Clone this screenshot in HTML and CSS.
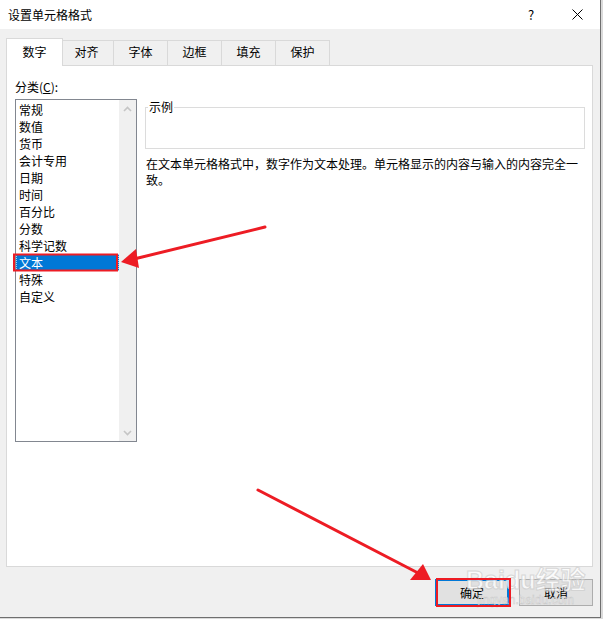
FILE: index.html
```html
<!DOCTYPE html>
<html lang="zh-CN">
  <head>
    <meta charset="UTF-8" />
    <title>设置单元格格式</title>
    <link rel="stylesheet" href="styles.css">
  </head>
  <body>
    <div class="dialog">
      <!-- Title bar -->
      <div class="titlebar">
        <span class="title">设置单元格格式</span>
        <span class="title-btn">?</span>
        <span class="title-btn">
          <svg width="11" height="11" viewBox="0 0 11 11">
            <path d="M0.5 0.5 L10.5 10.5 M10.5 0.5 L0.5 10.5" stroke="#000" stroke-width="1" fill="none"/>
          </svg>
        </span>
      </div>
      <div class="window-body">
        <!-- Tabs -->
        <div class="tabs">
          <div class="tab active">数字</div>
          <div class="tab">对齐</div>
          <div class="tab">字体</div>
          <div class="tab">边框</div>
          <div class="tab">填充</div>
          <div class="tab">保护</div>
        </div>
        <div class="panel">
          <div class="category-label">分类(<u>C</u>):</div>
          <div class="listbox">
            <ul class="list">
              <li>常规</li>
              <li>数值</li>
              <li>货币</li>
              <li>会计专用</li>
              <li>日期</li>
              <li>时间</li>
              <li>百分比</li>
              <li>分数</li>
              <li>科学记数</li>
              <li class="selected">文本</li>
              <li>特殊</li>
              <li>自定义</li>
            </ul>
            <div class="scrollbar">
              <span class="scroll-arrow">
                <svg width="9" height="6" viewBox="0 0 9 6"><path d="M1 5 L4.5 1.5 L8 5" stroke="#c5c5c5" stroke-width="1.6" fill="none"/></svg>
              </span>
              <span class="scroll-arrow">
                <svg width="9" height="6" viewBox="0 0 9 6"><path d="M1 1 L4.5 4.5 L8 1" stroke="#c5c5c5" stroke-width="1.6" fill="none"/></svg>
              </span>
            </div>
          </div>
          <div class="details">
            <fieldset class="sample">
              <legend>示例</legend>
              <div class="sample-value"></div>
            </fieldset>
            <p class="description">在文本单元格格式中，数字作为文本处理。单元格显示的内容与输入的内容完全一致。</p>
          </div>
        </div>
        <!-- Buttons -->
        <div class="buttons">
          <button class="btn btn-default">确定</button>
          <button class="btn">取消</button>
        </div>
      </div>
      <!-- Watermark -->
      <div class="watermark">
        <span class="watermark-logo">Baidu经验</span>
        <span class="watermark-url">jingyan.baidu.com</span>
      </div>
      <!-- Red annotations -->
      <svg class="annotations" width="603" height="619" viewBox="0 0 603 619">
        <rect x="14" y="254.5" width="103" height="16" fill="none" stroke="#ed1c24" stroke-width="2"/>
        <line x1="265" y1="227" x2="134" y2="259" stroke="#ed1c24" stroke-width="3" stroke-linecap="round"/>
        <polygon points="121,262 136,249 139,268" fill="#ed1c24"/>
        <rect x="437" y="579" width="73" height="27" fill="none" stroke="#ed1c24" stroke-width="2"/>
        <line x1="258" y1="490" x2="420" y2="574" stroke="#ed1c24" stroke-width="3" stroke-linecap="round"/>
        <polygon points="431,580 410,580 423,564" fill="#ed1c24"/>
      </svg>
    </div>
  </body>
</html>
```

FILE: styles.css
```css
* {
  margin: 0;
  padding: 0;
  box-sizing: border-box;
}
body {
  font-family: "Noto Sans CJK SC", "Microsoft YaHei", sans-serif;
  font-size: 12px;
  line-height: 16px;
  color: #000;
  background-color: #dadada;
}
.dialog {
  position: relative;
  width: 601px;
  height: 618px;
  display: flex;
  flex-direction: column;
  background-color: #f0f0f0;
  border-right: 1px solid #6f6f6f;
  border-bottom: 1px solid #6f6f6f;
}
/* Title bar */
.titlebar {
  height: 29px;
  display: flex;
  align-items: center;
  padding-left: 8px;
  background-color: #fff;
}
.title {
  flex: 1;
}
.title-btn {
  width: 46px;
  height: 29px;
  display: flex;
  align-items: center;
  justify-content: center;
  font-size: 13px;
}
/* Window body */
.window-body {
  flex: 1;
  display: flex;
  flex-direction: column;
  padding: 9px 7px 0 6px;
}
.tabs {
  height: 27px;
  display: flex;
  align-items: flex-end;
}
.tab {
  width: 55px;
  height: 25px;
  margin-left: -1px;
  padding-top: 3px;
  text-align: center;
  border: 1px solid #d9d9d9;
  border-bottom: none;
  background-color: #f0f0f0;
}
.tab.active {
  position: relative;
  z-index: 1;
  width: 57px;
  height: 28px;
  margin-left: 0;
  margin-right: -3px;
  margin-bottom: -1px;
  padding-top: 5px;
  background-color: #fff;
}
.panel {
  height: 502px;
  display: grid;
  grid-template-columns: 122px 1fr;
  grid-template-rows: 16px auto;
  column-gap: 8px;
  row-gap: 4px;
  align-content: start;
  padding: 13px 7px 0 8px;
  background-color: #fff;
  border: 1px solid #d9d9d9;
}
.category-label {
  grid-column: 1 / 3;
}
/* Category list */
.listbox {
  height: 343px;
  display: flex;
  border: 1px solid #828790;
}
.list {
  flex: 1;
  list-style: none;
  padding-top: 1px;
}
.list li {
  height: 17px;
  line-height: 17px;
  padding-left: 3px;
}
.list li.selected {
  background-color: #0078d7;
  color: #fff;
  outline: 1px dotted #a6cdf0;
  outline-offset: -1px;
}
.scrollbar {
  width: 17px;
  display: flex;
  flex-direction: column;
  justify-content: space-between;
  background-color: #f0f0f0;
}
.scroll-arrow {
  height: 17px;
  display: flex;
  align-items: center;
  justify-content: center;
}
/* Sample + description */
.sample {
  min-width: 0;
  padding: 0 2px;
  border: 1px solid #dcdcdc;
}
.sample legend {
  padding: 0 1px;
  line-height: 16px;
}
.sample-value {
  height: 33px;
}
.description {
  margin-top: 7px;
  padding-left: 1px;
}
/* Buttons */
.buttons {
  display: flex;
  justify-content: flex-end;
  gap: 10px;
  margin-top: 12px;
}
.btn {
  width: 74px;
  height: 27px;
  font-family: inherit;
  font-size: 12px;
  color: #000;
  background-color: #e1e1e1;
  border: 1px solid #adadad;
}
.btn-default {
  border-color: #0078d7;
  box-shadow: inset 0 0 0 1px #0078d7;
}
/* Overlays */
.watermark {
  position: absolute;
  left: 466px;
  top: 566px;
  display: flex;
  flex-direction: column;
  align-items: center;
  pointer-events: none;
  opacity: 0.75;
}
.watermark-logo {
  font-family: "Liberation Sans", "Noto Sans CJK SC", sans-serif;
  font-size: 25px;
  line-height: 28px;
  font-weight: bold;
  color: #fff;
  -webkit-text-stroke: 1px #cfcfcf;
}
.watermark-url {
  font-family: "Liberation Sans", sans-serif;
  font-size: 12px;
  line-height: 12px;
  color: #fff;
  -webkit-text-stroke: 0.5px #bdbdbd;
}
.annotations {
  position: absolute;
  left: 0;
  top: 0;
  pointer-events: none;
}
```
